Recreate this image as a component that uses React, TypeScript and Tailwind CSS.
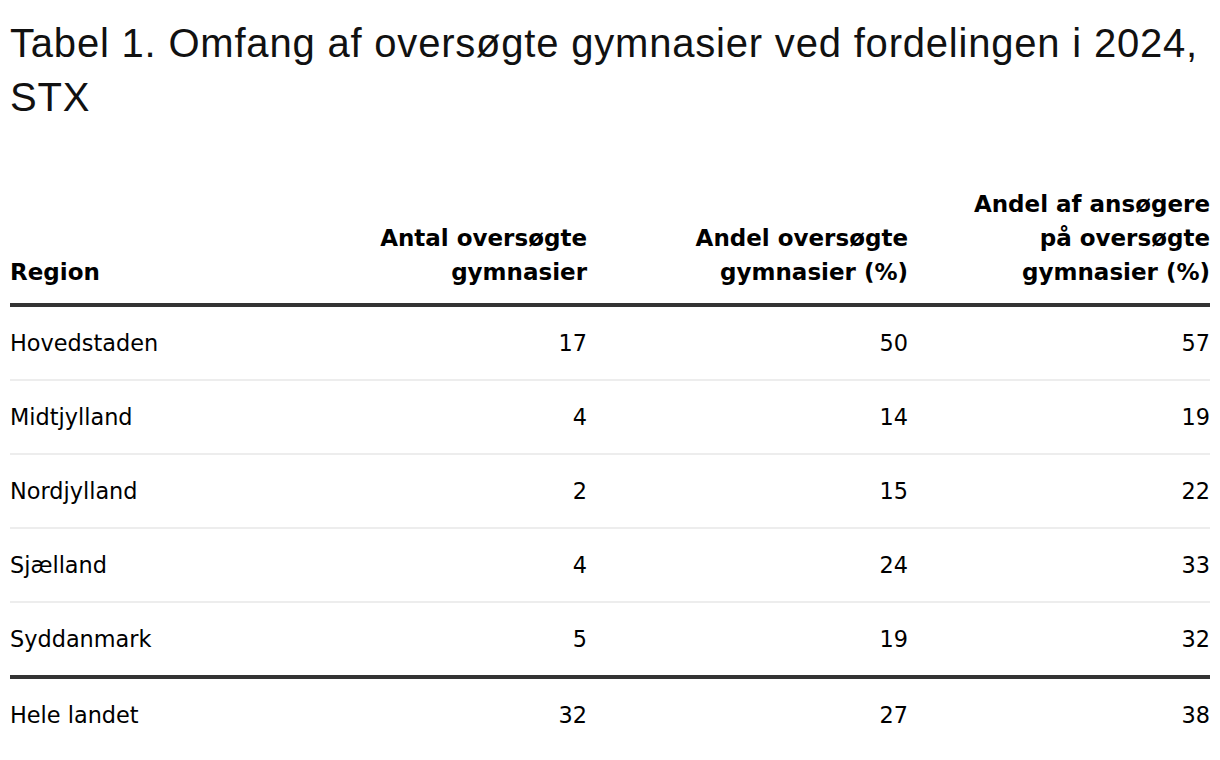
import React from "react";

const rows = [
  ["Hovedstaden", "17", "50", "57"],
  ["Midtjylland", "4", "14", "19"],
  ["Nordjylland", "2", "15", "22"],
  ["Sjælland", "4", "24", "33"],
  ["Syddanmark", "5", "19", "32"],
];

const grid = "grid grid-cols-[270px_307px_321px_302px]";

export default function App() {
  return (
    <div className="min-h-[760px] bg-white px-[10px] text-black">
      <h1 className="pt-[16px] font-['Liberation_Sans',Arial,sans-serif] text-[40px] font-normal leading-[54px] tracking-[0.02em] text-[#111]">
        Tabel 1. Omfang af oversøgte gymnasier ved fordelingen i 2024, STX
      </h1>
      <div className="mt-[63px] font-['DejaVu_Sans',sans-serif]">
        <div className={`${grid} items-end border-b-4 border-[#333] pb-[14px] text-[23px] font-bold leading-[34px]`}>
          <div>Region</div>
          <div className="text-right">
            Antal oversøgte
            <br />
            gymnasier
          </div>
          <div className="text-right">
            Andel oversøgte
            <br />
            gymnasier (%)
          </div>
          <div className="text-right">
            Andel af ansøgere
            <br />
            på oversøgte
            <br />
            gymnasier (%)
          </div>
        </div>
        {rows.map((r, i) => (
          <div
            key={r[0]}
            className={`${grid} h-[72px] items-center text-[22.4px] leading-[26px] ${
              i < rows.length - 1 ? "box-content border-b-2 border-[#ededed]" : ""
            }`}
          >
            <div>{r[0]}</div>
            <div className="text-right">{r[1]}</div>
            <div className="text-right">{r[2]}</div>
            <div className="text-right">{r[3]}</div>
          </div>
        ))}
        <div className={`${grid} h-[72px] items-center border-t-4 border-[#333] box-content text-[22.4px] leading-[26px]`}>
          <div>Hele landet</div>
          <div className="text-right">32</div>
          <div className="text-right">27</div>
          <div className="text-right">38</div>
        </div>
      </div>
    </div>
  );
}
